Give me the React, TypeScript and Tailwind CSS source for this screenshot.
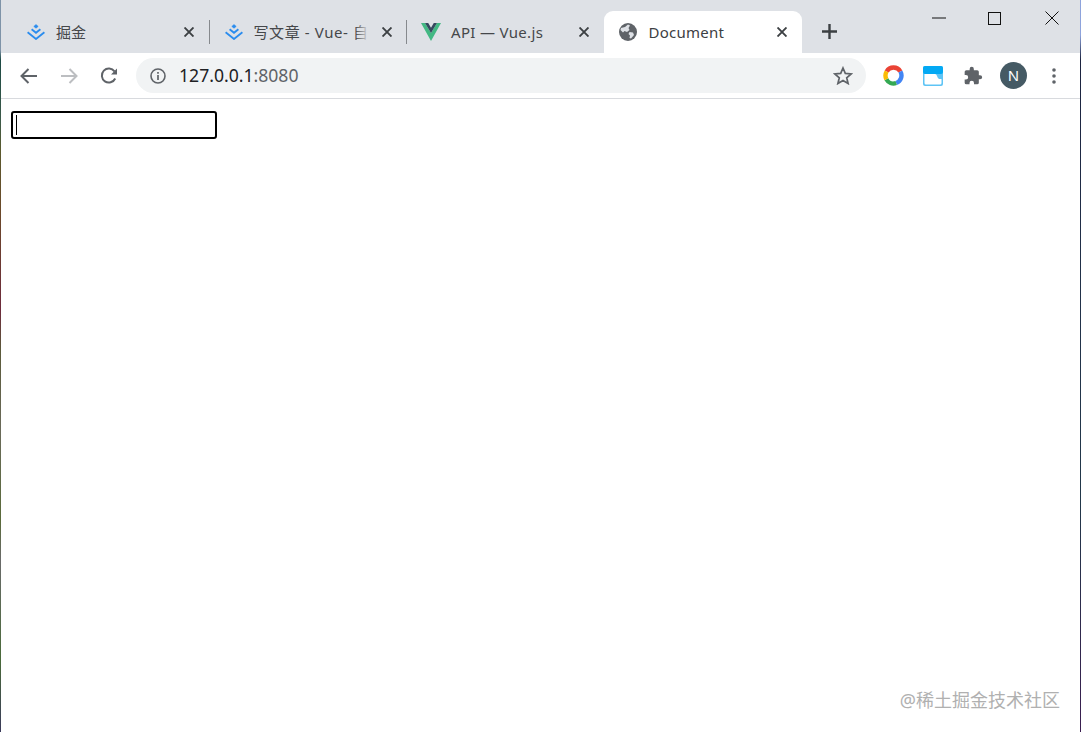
const font = { fontFamily: '"Noto Sans", "Noto Sans CJK SC", sans-serif' };

function Juejin() {
  return (
    <svg width="20" height="16" viewBox="0 0 20 16" fill="none" stroke="#2a8cee" strokeWidth="1.8" className="shrink-0">
      <path d="M10 0.6 L12.2 2.4 L10 4.2 L7.8 2.4 Z" fill="#2a8cee" strokeWidth="0.6" />
      <path d="M5.6 5.2 L10 8.8 L14.4 5.2" />
      <path d="M1.6 8.2 L10 15 L18.4 8.2" />
    </svg>
  );
}

function VueLogo() {
  return (
    <svg width="20" height="18" viewBox="0 0 20 18" className="shrink-0">
      <path d="M0 0 H4 L10 10 L16 0 H20 L10 18 Z" fill="#42b883" />
      <path d="M4 0 H7.2 L10 4.8 L12.8 0 H16 L10 10 Z" fill="#35495e" />
    </svg>
  );
}

function Globe() {
  return (
    <svg width="18" height="18" viewBox="0 0 18 18" className="shrink-0">
      <circle cx="9" cy="9" r="9" fill="#5f6368" />
      <path d="M2 5 L6 4 L9 1.5 L11 2.5 L9.5 5 L10.5 7 L8 9 L5.5 8 L4 9.5 L1.5 7 Z M10.5 9 L14 9.5 L15 12 L12 15.5 L10.5 15 L11 12.5 L9.5 11 Z" fill="#dee1e6" />
    </svg>
  );
}

function CloseX() {
  return (
    <svg width="10" height="10" viewBox="0 0 10 10" stroke="#3c4043" strokeWidth="1.9" className="shrink-0">
      <path d="M0.5 0.5 L9.5 9.5 M9.5 0.5 L0.5 9.5" />
    </svg>
  );
}

function Tab({ icon, label, fade, sep = true, textClass }: { icon: React.ReactNode; label: string; fade?: boolean; sep?: boolean; textClass?: string }) {
  return (
    <div className="relative flex h-[42px] w-[197.5px] shrink-0 items-center pb-[1px] pl-[15px]">
      <div className="flex w-[20px] justify-center">{icon}</div>
      <div className={`relative ml-[10px] w-[122px] whitespace-nowrap text-[15px] leading-[20px] text-[#45474a] ${textClass ?? ""}`}>
        <span className="relative">
          {label}
          {fade && <span className="absolute right-0 top-0 h-full w-[14px] bg-gradient-to-r from-transparent to-[#dee1e6]" />}
        </span>
      </div>
      <div className="ml-[6px]">
        <CloseX />
      </div>
      {sep && <div className="absolute right-[-1px] top-[9px] h-[24px] w-[1px] bg-[#86898d]" />}
    </div>
  );
}

export default function App() {
  return (
    <div className="relative flex h-screen w-full flex-col overflow-hidden bg-white px-[1px]" style={font}>
      <div className="flex h-[53px] bg-[#dee1e6]">
        <div className="ml-[10px] mt-[11px] flex">
          <Tab icon={<Juejin />} label="掘金" />
          <Tab icon={<Juejin />} label="写文章 - Vue- 自" fade textClass="tracking-[0.6px]" />
          <Tab icon={<VueLogo />} label="API — Vue.js" sep={false} textClass="tracking-[0.33px]" />
          <div className="relative flex h-[42px] w-[198px] shrink-0 items-center rounded-t-[9px] bg-white pb-[1px] pl-[15px]">
            <Globe />
            <span className="ml-[12px] w-[123px] text-[15px] leading-[20px] tracking-[0.25px] text-[#3c4043]">Document</span>
            <div className="ml-[5px]">
              <CloseX />
            </div>
          </div>
          <div className="ml-[20px] flex h-[42px] items-center pb-[1px]">
            <svg width="15" height="15" viewBox="0 0 15 15" stroke="#3c4043" strokeWidth="2.4">
              <path d="M7.5 0 V15 M0 7.5 H15" />
            </svg>
          </div>
        </div>
        <div className="ml-auto flex h-[36px] items-center pr-[21px]">
          <svg width="14" height="2" viewBox="0 0 14 2" stroke="#111" strokeWidth="1">
            <path d="M0 1 H14" />
          </svg>
          <svg width="13" height="13" viewBox="0 0 13 13" fill="none" stroke="#111" strokeWidth="1" className="ml-[42px]">
            <rect x="0.5" y="0.5" width="12" height="12" />
          </svg>
          <svg width="14" height="14" viewBox="0 0 14 14" stroke="#111" strokeWidth="1" className="ml-[44px]">
            <path d="M0.5 0.5 L13.5 13.5 M13.5 0.5 L0.5 13.5" />
          </svg>
        </div>
      </div>

      <div className="flex h-[46px] items-center border-b border-b-[#d8dade] bg-white">
        <svg width="18" height="16" viewBox="0 0 18 16" fill="none" stroke="#5f6368" strokeWidth="2" className="ml-[19px]">
          <path d="M17 8 H2 M8.5 1 L1.5 8 L8.5 15" />
        </svg>
        <svg width="18" height="16" viewBox="0 0 18 16" fill="none" stroke="#bcbec1" strokeWidth="2" className="ml-[22px]">
          <path d="M1 8 H16 M9.5 1 L16.5 8 L9.5 15" />
        </svg>
        <svg width="18" height="18" viewBox="0 0 18 18" fill="none" className="ml-[22px]">
          <path d="M15.2 11.5 A7 7 0 1 1 14.5 4.4" stroke="#5f6368" strokeWidth="2" />
          <path d="M17 1.5 V7.5 H11 Z" fill="#5f6368" />
        </svg>
        <div className="ml-[18px] flex h-[35px] w-[730px] items-center rounded-full bg-[#f1f3f4]">
          <svg width="16" height="16" viewBox="0 0 16 16" fill="none" className="ml-[14px]">
            <circle cx="8" cy="8" r="7" stroke="#5f6368" strokeWidth="1.6" />
            <path d="M8 7 V12 M8 4 V5.7" stroke="#5f6368" strokeWidth="1.7" />
          </svg>
          <span className="ml-[13px] pb-[2px] text-[17.6px] leading-[24px] text-[#202124]">
            127.0.0.1<span className="text-[#5f6368]">:8080</span>
          </span>
          <svg width="20" height="19" viewBox="0 0 20 19" fill="none" stroke="#5f6368" strokeWidth="1.7" className="ml-auto mr-[13px]">
            <path d="M10 2 L12.3 7.4 L18.2 7.9 L13.7 11.8 L15.1 17.5 L10 14.5 L4.9 17.5 L6.3 11.8 L1.8 7.9 L7.7 7.4 Z" />
          </svg>
        </div>
        <svg width="21" height="21" viewBox="0 0 21 21" fill="none" strokeWidth="4.4" className="ml-[17px]">
          <path d="M3.6 6.5 A8 8 0 0 1 17.4 6.5" stroke="#ea4335" />
          <path d="M17.4 6.5 A8 8 0 0 1 13.2 18" stroke="#4285f4" />
          <path d="M13.2 18 A8 8 0 0 1 3.4 14.2" stroke="#34a853" />
          <path d="M3.4 14.2 A8 8 0 0 1 3.6 6.5" stroke="#fbbc04" />
        </svg>
        <svg width="20" height="20" viewBox="0 0 20 20" className="ml-[19px]">
          <rect x="0" y="0" width="20" height="20" rx="2" fill="#5ec4f5" />
          <rect x="0" y="0" width="20" height="8" rx="2" fill="#03a9f4" />
          <path d="M1.5 8 H12 Q13.5 8 14 10 T16 13 H18.5 V17 Q18.5 18.5 17 18.5 H3 Q1.5 18.5 1.5 17 Z" fill="#fff" />
        </svg>
        <svg width="20" height="20" viewBox="0 0 24 24" fill="#5f6368" className="ml-[20px]">
          <path d="M20.5 11H19V7a2 2 0 0 0-2-2h-4V3.5a2.5 2.5 0 0 0-5 0V5H4a2 2 0 0 0-2 2v3.8h1.5a2.7 2.7 0 0 1 0 5.4H2V20a2 2 0 0 0 2 2h3.8v-1.5a2.7 2.7 0 0 1 5.4 0V22H17a2 2 0 0 0 2-2v-4h1.5a2.5 2.5 0 0 0 0-5z" />
        </svg>
        <div className="ml-[17px] flex h-[27px] w-[27px] items-center justify-center rounded-full bg-[#455a64] text-[15px] text-white">N</div>
        <svg width="4" height="16" viewBox="0 0 4 16" fill="#5f6368" className="ml-[25px]">
          <circle cx="2" cy="2" r="1.8" />
          <circle cx="2" cy="8" r="1.8" />
          <circle cx="2" cy="14" r="1.8" />
        </svg>
      </div>

      <div className="flex-1 pl-[10px] pt-[12px]">
        <div className="flex h-[28px] w-[206px] items-center rounded-[3px] border-2 border-black pl-[3px]">
          <div className="h-[20px] w-[1px] bg-black" />
        </div>
      </div>

      <div className="absolute right-[21px] top-[688px] text-[18px] leading-[24px] text-[#b0b0b0]">@稀土掘金技术社区</div>
      <div className="absolute left-0 top-0 h-full w-[1px] bg-[linear-gradient(to_bottom,#7e93a8_0,#7e93a8_50px,#1d4a44_60px,#3c5a4a_120px,#5b5a2e_150px,#6b4a2a_210px,#6e2b3c_310px,#5b5a3a_350px,#6a6a5a_430px,#5a6a3a_520px,#6a6a6a_560px,#4a6a3a_660px,#3a3a5a_732px)]" />
      <div className="absolute right-0 top-0 h-full w-[1px] bg-[linear-gradient(to_bottom,#8ea3dc_0,#8ea3dc_35px,#1c2340_60px,#22324a_300px,#22384a_500px,#3a1e50_732px)]" />
    </div>
  );
}
